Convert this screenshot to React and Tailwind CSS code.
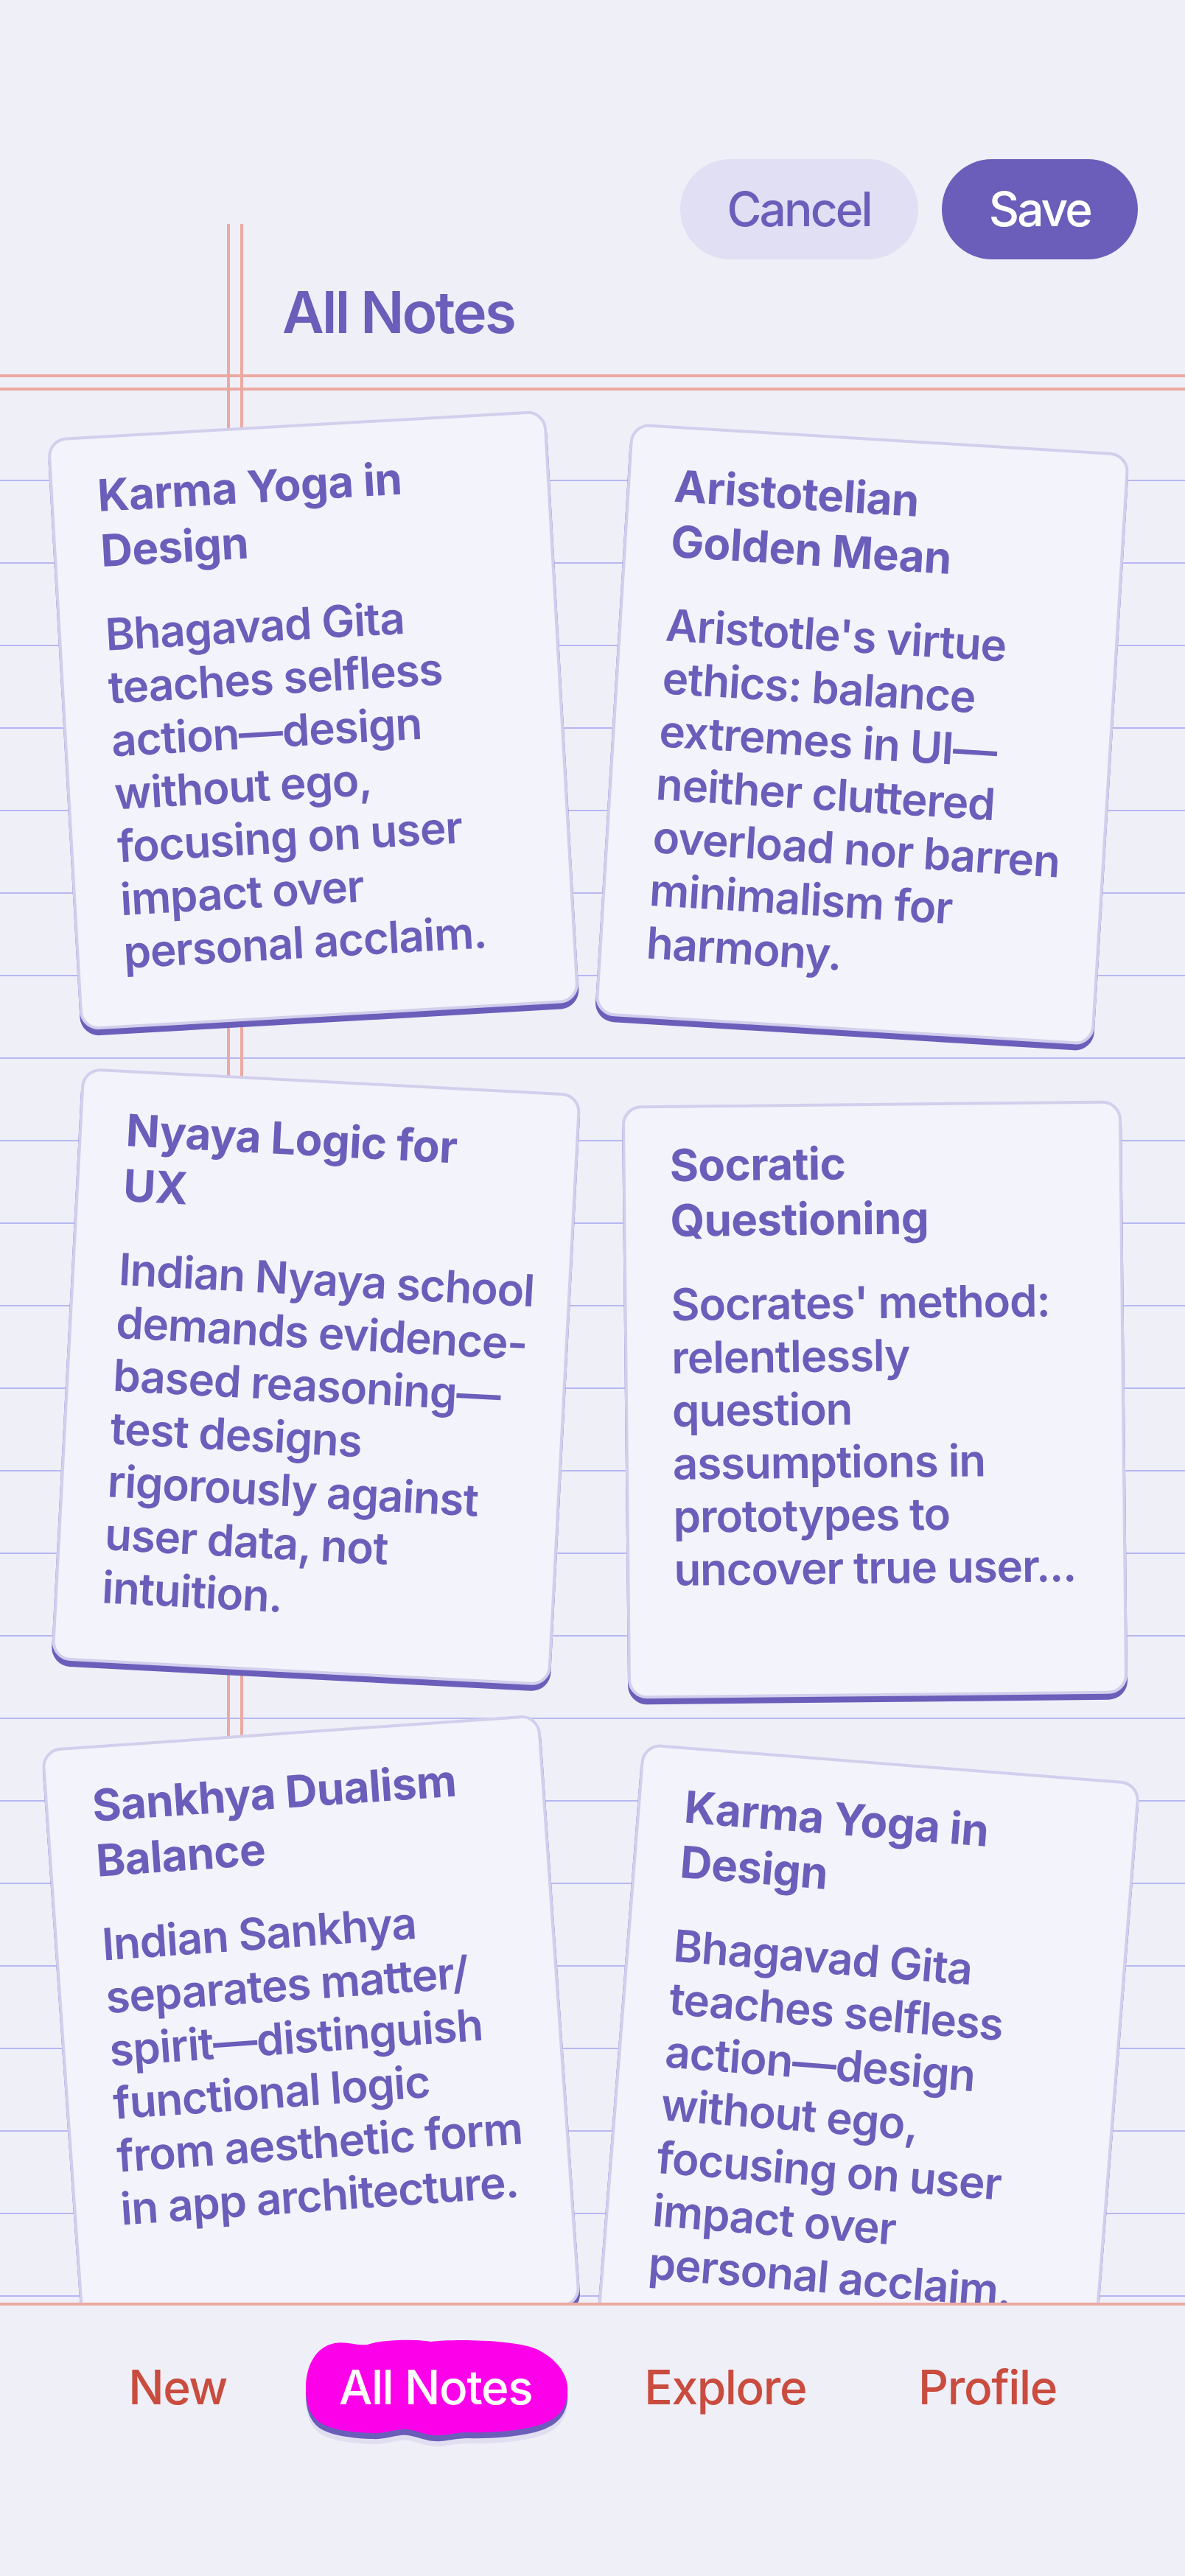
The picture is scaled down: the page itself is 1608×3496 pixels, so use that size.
const notes = [
  {
    title: ['Karma Yoga in', 'Design'],
    body: ['Bhagavad Gita', 'teaches selfless', 'action—design', 'without ego,', 'focusing on user', 'impact over', 'personal acclaim.'],
    tilt: 'translate-x-[4px] -translate-y-[11px] -rotate-[3.25deg]',
  },
  {
    title: ['Aristotelian', 'Golden Mean'],
    body: ["Aristotle's virtue", 'ethics: balance', 'extremes in UI—', 'neither cluttered', 'overload nor barren', 'minimalism for', 'harmony.'],
    tilt: '-translate-x-[17px] translate-y-[8px] rotate-[3.5deg]',
  },
  {
    title: ['Nyaya Logic for', 'UX'],
    body: ['Indian Nyaya school', 'demands evidence-', 'based reasoning—', 'test designs', 'rigorously against', 'user data, not', 'intuition.'],
    tilt: 'translate-x-[8px] -translate-y-[13px] rotate-[3deg]',
  },
  {
    title: ['Socratic', 'Questioning'],
    body: ["Socrates' method:", 'relentlessly', 'question', 'assumptions in', 'prototypes to', 'uncover true user...'],
    tilt: 'translate-y-[18px] -rotate-[0.6deg]',
  },
  {
    title: ['Sankhya Dualism', 'Balance'],
    body: ['Indian Sankhya', 'separates matter/', 'spirit—distinguish', 'functional logic', 'from aesthetic form', 'in app architecture.'],
    tilt: 'translate-x-[1px] -translate-y-[23px] -rotate-[4deg]',
  },
  {
    title: ['Karma Yoga in', 'Design'],
    body: ['Bhagavad Gita', 'teaches selfless', 'action—design', 'without ego,', 'focusing on user', 'impact over', 'personal acclaim.'],
    tilt: '-translate-x-[9px] translate-y-[19px] rotate-[4.5deg]',
  },
]

export default function App() {
  return (
    <div className="relative flex h-[3496px] flex-col overflow-hidden bg-[#efeff8] font-[Inter,sans-serif] text-[#6a5eba]">
      {/* margin lines */}
      <div className="pointer-events-none absolute left-[308px] top-[304px] h-[2821px] w-[4px] bg-[#eca9a1]" />
      <div className="pointer-events-none absolute left-[326px] top-[304px] h-[2821px] w-[4px] bg-[#eca9a1]" />

      {/* top actions */}
      <header className="flex shrink-0 justify-end gap-[32px] pr-[64px] pt-[216px]">
        <button className="h-[136px] rounded-full bg-[#e1dff3] px-[64px] text-[64px] font-medium tracking-[-0.045em] text-[#6a5eba]">
          Cancel
        </button>
        <button className="h-[136px] rounded-full bg-[#6a5eba] px-[64px] text-[64px] font-medium tracking-[-0.045em] text-white">
          Save
        </button>
      </header>

      <h1 className="mt-[24px] shrink-0 pl-[383px] text-[78px] font-semibold leading-[96px] tracking-[-0.035em]">
        All Notes
      </h1>

      <div className="mt-[36px] h-[22px] shrink-0 border-y-4 border-[#eca9a1]" />

      {/* notes */}
      <main className="mt-[11px] flex-1 overflow-hidden bg-[repeating-linear-gradient(to_bottom,transparent_0,transparent_110px,#b6b8f2_110px,#b6b8f2_112px)] px-[82px] pt-[45px]">
        <div className="grid grid-cols-2 gap-[88px]">
          {notes.map((note, i) => (
            <NoteCard key={i} note={note} />
          ))}
        </div>
      </main>

      {/* bottom nav */}
      <nav className="flex h-[371px] shrink-0 items-start justify-center gap-[56px] border-t-4 border-[#eca9a1] bg-[#efeff8] pt-[46px]">
        <NavItem label="New" />
        <NavItem label="All Notes" active />
        <NavItem label="Explore" />
        <NavItem label="Profile" />
      </nav>
    </div>
  )
}

function NoteCard({ note }) {
  return (
    <div
      className={`rounded-[26px] border-4 border-[#d2ceec] bg-[#f3f3fb] px-[60px] pb-[63px] pt-[40px] shadow-[0_8px_0_#6a5eba] ${note.tilt}`}
    >
      <h3 className="whitespace-nowrap text-[60px] font-bold leading-[75px] tracking-[-0.01em]">
        {note.title.map((line, i) => (
          <span key={i} className="block">
            {line}
          </span>
        ))}
      </h3>
      <p className="mt-[40px] whitespace-nowrap text-[60px] font-semibold leading-[72px] tracking-[-0.018em]">
        {note.body.map((line, i) => (
          <span key={i} className="block">
            {line}
          </span>
        ))}
      </p>
    </div>
  )
}

function NavItem({ label, active }) {
  if (!active) {
    return (
      <a className="flex h-[130px] items-center px-[48px] text-[64px] font-medium leading-none tracking-[-0.022em] text-[#c94c3f]">
        {label}
      </a>
    )
  }
  return (
    <a className="relative flex h-[130px] items-center px-[48px] text-[64px] font-medium leading-none tracking-[-0.022em] text-white">
      <BlobPill />
      <span className="relative">{label}</span>
    </a>
  )
}

function BlobPill() {
  const d =
    'M3 66 C3 36 16 10 42 5 C58 2 72 9 86 7 C104 0 150 -1 172 3 C200 -1 288 0 316 14 C343 28 356 48 356 68 C356 92 344 106 324 114 C298 124 252 127 222 126 C204 126 192 131 176 130 C160 129 146 120 131 122 C116 124 106 128 92 127 C62 126 36 122 21 112 C9 103 3 88 3 66 Z'
  return (
    <svg
      className="absolute left-0 top-0 h-[150px] w-full overflow-visible"
      viewBox="0 0 356 150"
      preserveAspectRatio="none"
    >
      <path d={d} fill="#ddd7f0" opacity="0.7" transform="translate(0 15)" />
      <path d={d} fill="#6a5eba" transform="translate(0 8)" />
      <path d={d} fill="#fd00ea" />
    </svg>
  )
}
